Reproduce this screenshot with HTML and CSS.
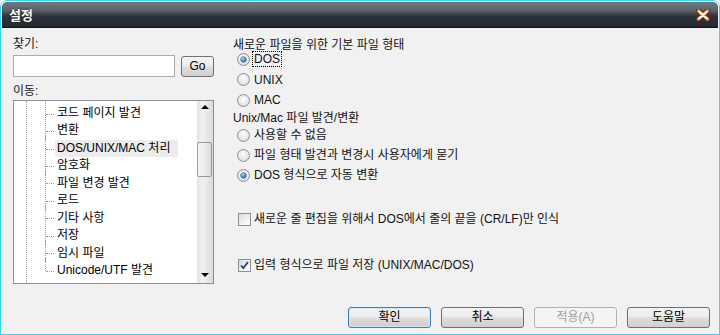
FILE: index.html
```html
<!DOCTYPE html>
<html lang="ko">
<head>
    <meta charset="UTF-8">
    <title>설정</title>
    <link rel="stylesheet" href="styles.css">
</head>
<body>

<div class="window">
    <div class="frame">
        <div class="titlebar">
            <span class="title">설정</span>
            <svg class="close" width="14" height="12" viewBox="0 0 14 12">
                <path d="M2.5 2 L11.5 10 M11.5 2 L2.5 10" stroke="#5a2410" stroke-width="5" stroke-linecap="round"/>
                <path d="M2.5 2 L11.5 10 M11.5 2 L2.5 10" stroke="#e8793a" stroke-width="3.6" stroke-linecap="round"/>
                <path d="M3 2.5 L11 9.5 M11 2.5 L3 9.5" stroke="#ffffff" stroke-width="1.8" stroke-linecap="round"/>
            </svg>
        </div>

        <div class="content">
            <div class="left">
                <div class="label">찾기:</div>
                <div class="search-row">
                    <input type="text" class="search">
                    <button class="btn go">Go</button>
                </div>
                <div class="label label-move">이동:</div>
                <div class="tree">
                    <div class="tree-view">
                        <div class="branch">
                            <ul class="nodes">
                                <li><span>코드 페이지 발견</span></li>
                                <li><span>변환</span></li>
                                <li class="selected"><span>DOS/UNIX/MAC 처리</span></li>
                                <li><span>암호화</span></li>
                                <li><span>파일 변경 발견</span></li>
                                <li><span>로드</span></li>
                                <li><span>기타 사항</span></li>
                                <li><span>저장</span></li>
                                <li><span>임시 파일</span></li>
                                <li><span>Unicode/UTF 발견</span></li>
                            </ul>
                        </div>
                    </div>
                    <div class="scrollbar">
                        <div class="arrow top"><span class="tri up"></span></div>
                        <div class="thumb"></div>
                        <div class="track"></div>
                        <div class="arrow"><span class="tri down"></span></div>
                    </div>
                </div>
            </div>

            <div class="right">
                <div class="group-title">새로운 파일을 위한 기본 파일 형태</div>
                <div class="options">
                    <label class="option"><span class="radio checked"></span><span class="text focus">DOS</span></label>
                    <label class="option"><span class="radio"></span><span class="text">UNIX</span></label>
                    <label class="option"><span class="radio"></span><span class="text">MAC</span></label>
                </div>

                <div class="group-title second">Unix/Mac 파일 발견/변환</div>
                <div class="options tight">
                    <label class="option"><span class="radio"></span><span class="text">사용할 수 없음</span></label>
                    <label class="option"><span class="radio"></span><span class="text">파일 형태 발견과 변경시 사용자에게 묻기</span></label>
                    <label class="option"><span class="radio checked"></span><span class="text">DOS 형식으로 자동 변환</span></label>
                </div>

                <label class="option check first-check"><span class="checkbox"></span><span class="text">새로운 줄 편집을 위해서 DOS에서 줄의 끝을 (CR/LF)만 인식</span></label>
                <label class="option check second-check">
                    <span class="checkbox">
                        <svg width="11" height="11" viewBox="0 0 11 11"><path d="M2 5.5 L4.3 8 L9 2" fill="none" stroke="#1f3d7c" stroke-width="1.8"/></svg>
                    </span>
                    <span class="text">입력 형식으로 파일 저장 (UNIX/MAC/DOS)</span>
                </label>
            </div>
        </div>

        <div class="footer">
            <button class="btn action default">확인</button>
            <button class="btn action">취소</button>
            <button class="btn action" disabled>적용(A)</button>
            <button class="btn action">도움말</button>
        </div>
    </div>
</div>

</body>
</html>
```

FILE: styles.css
```css
body {
    margin: 0;
    font-family: "Liberation Sans", "Noto Sans CJK KR", sans-serif;
    font-size: 12px;
    color: #111;
    background: #ffffff;
}

.window {
    width: 720px;
    height: 335px;
    box-sizing: border-box;
    border: 1px solid #3fd0ea;
    border-radius: 7px 7px 0 0;
}

.frame {
    height: 100%;
    box-sizing: border-box;
    border: 1px solid #eef7f9;
    border-radius: 6px 6px 0 0;
    background: #f1f1f1;
    display: flex;
    flex-direction: column;
}

.titlebar {
    height: 25px;
    border-bottom: 1px solid #10141a;
    border-radius: 5px 5px 0 0;
    background: linear-gradient(#737981 0%, #5a6068 35%, #2e343c 55%, #232930 100%);
    display: flex;
    align-items: center;
    justify-content: space-between;
    padding: 0 8px 0 7px;
}

.title {
    color: #ffffff;
    font-weight: bold;
    font-size: 13px;
    line-height: 15px;
    margin-top: 1px;
    text-shadow: 0 0 2px #1a1f25;
}

.close {
    margin-top: 1px;
}

.content {
    flex: 1;
    display: flex;
    gap: 19px;
    padding: 8px 11px 0 11px;
}

.left {
    width: 201px;
}

.label {
    line-height: 16px;
    height: 16px;
}

.label-move {
    margin-top: 6px;
}

.search-row {
    display: flex;
    align-items: center;
    gap: 6px;
    margin-top: 3px;
    height: 22px;
}

.search {
    width: 162px;
    height: 22px;
    box-sizing: border-box;
    border: 1px solid #a9acb2;
    background: #ffffff;
    margin: 0;
    padding: 2px;
}

.btn {
    font-family: "Liberation Sans", "Noto Sans CJK KR", sans-serif;
    font-size: 12px;
    color: #000;
    box-sizing: border-box;
    border: 1px solid #707070;
    border-radius: 3px;
    background: linear-gradient(#f3f3f3 0%, #ececec 48%, #dddddd 52%, #d0d0d0 100%);
    padding: 0;
    margin: 0;
    line-height: 17px;
}

.go {
    width: 33px;
    height: 21px;
}

.tree {
    margin-top: 1px;
    height: 184px;
    box-sizing: border-box;
    border: 1px solid #8d9096;
    background: #ffffff;
    display: flex;
}

.tree-view {
    flex: 1;
    padding-left: 12px;
    overflow: hidden;
}

.branch {
    height: 100%;
    border-left: 1px dotted #a0a0a0;
    padding-left: 18px;
}

.nodes {
    list-style: none;
    margin: 0;
    padding: 4px 0 0 0;
}

.nodes li {
    position: relative;
    height: 17.45px;
    line-height: 17px;
    padding-left: 10px;
    white-space: nowrap;
    color: #000;
}

.nodes li span {
    display: inline-block;
    padding: 0 2px;
    height: 17px;
}

.nodes li::before {
    content: "";
    position: absolute;
    left: 0;
    top: -5px;
    bottom: 0;
    border-left: 1px dotted #a0a0a0;
}

.nodes li:last-child::before {
    bottom: 50%;
}

.nodes li::after {
    content: "";
    position: absolute;
    left: 1px;
    top: 50%;
    width: 8px;
    border-top: 1px dotted #a0a0a0;
}

.nodes li.selected span {
    background: #ececec;
    width: 119px;
}

.scrollbar {
    width: 16px;
    display: flex;
    flex-direction: column;
    background: linear-gradient(to right, #e2e2e2, #f2f2f2 35%, #e6e6e6 70%, #d9d9d9);
}

.arrow {
    height: 17px;
    display: flex;
    align-items: center;
    justify-content: center;
}

.arrow.top {
    align-items: flex-start;
    padding-top: 4px;
    height: 13px;
}

.tri {
    width: 0;
    height: 0;
    border-left: 4px solid transparent;
    border-right: 4px solid transparent;
}

.tri.up {
    border-bottom: 4px solid #000;
}

.tri.down {
    border-top: 4px solid #000;
}

.thumb {
    margin: 24px 1px 0 0;
    height: 35px;
    box-sizing: border-box;
    border: 1px solid #9a9a9a;
    border-radius: 2px;
    background: linear-gradient(to right, #f6f6f6, #ececec 50%, #dadada);
}

.track {
    flex: 1;
}

.right {
    flex: 1;
    padding-top: 2px;
}

.group-title {
    line-height: 14px;
    height: 14px;
}

.group-title.second {
    margin-top: 3.5px;
}

.options {
    display: flex;
    flex-direction: column;
    gap: 6.5px;
}

.options.tight {
    gap: 6px;
    margin-top: 3.5px;
}

.option {
    display: flex;
    align-items: center;
    gap: 3px;
    height: 14px;
    line-height: 14px;
    padding-left: 4px;
    white-space: nowrap;
}

.option .text {
    padding: 0 1px;
}

.option .text.focus {
    outline: 1px dotted #000;
}

.radio {
    width: 13px;
    height: 13px;
    box-sizing: border-box;
    flex: none;
    border-radius: 50%;
    border: 1px solid #8e8f8f;
    background: radial-gradient(circle at 50% 40%, #fdfdfd, #e8e8e8 55%, #cdcdcd);
    display: flex;
    align-items: center;
    justify-content: center;
}

.radio.checked::after {
    content: "";
    width: 5px;
    height: 5px;
    border-radius: 50%;
    background: radial-gradient(circle at 40% 35%, #a6dcfc, #2c80d2 55%, #0f3d78);
    box-shadow: 0 0 0 0.5px #21436e;
}

.check {
    padding-left: 5px;
    gap: 2px;
}

.first-check {
    margin-top: 30px;
}

.second-check {
    margin-top: 32px;
}

.checkbox {
    width: 13px;
    height: 13px;
    box-sizing: border-box;
    flex: none;
    border: 1px solid #8e8f8f;
    background: linear-gradient(135deg, #d8d8d8, #f6f6f6 70%, #ffffff);
    display: flex;
    align-items: center;
    justify-content: center;
}

.footer {
    display: flex;
    justify-content: flex-end;
    gap: 10px;
    padding: 0 8px 5px 0;
}

.action {
    width: 83px;
    height: 21px;
}

.action.default {
    border-color: #3c7fb1;
    box-shadow: inset 0 0 0 1px #cfe8f7;
}

.action:disabled {
    border-color: #adb2b5;
    background: #f4f4f4;
    color: #a0a0a0;
}
```
